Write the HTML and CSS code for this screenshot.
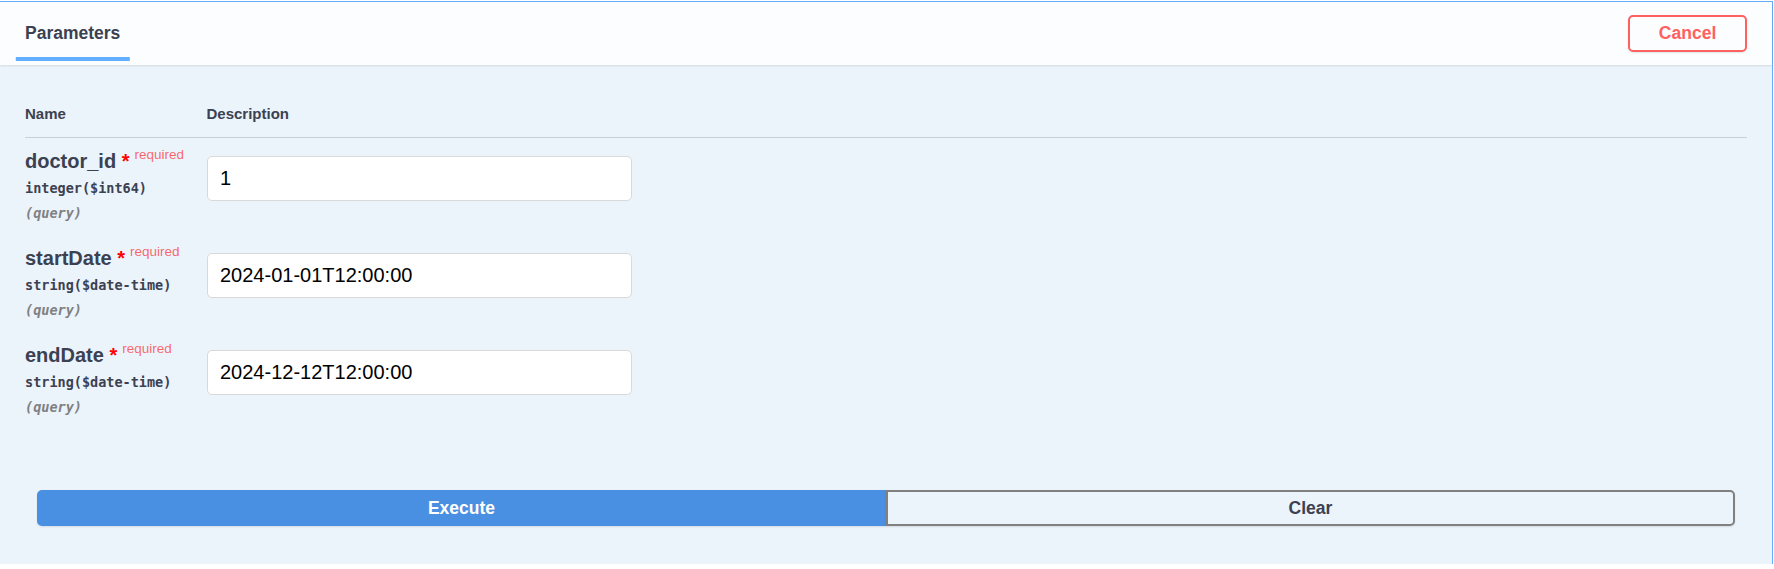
FILE: index.html
```html
<!DOCTYPE html>
<html lang="en">
<head>
<meta charset="utf-8">
<title>Parameters</title>
<link rel="stylesheet" href="styles.css">
</head>
<body>
<div class="opblock">
  <div class="section-header">
    <div class="tab">
      <h4 class="tab-title"><span class="tab-label">Parameters</span></h4>
    </div>
    <button class="btn cancel" type="button">Cancel</button>
  </div>

  <div class="table-container">
    <div class="params-head">
      <div class="th th-name">Name</div>
      <div class="th th-desc">Description</div>
    </div>

    <div class="param-row">
      <div class="col-name">
        <div class="param-name">doctor_id<span class="req-star">&nbsp;*</span><span class="req-label">required</span></div>
        <div class="param-type">integer<span class="prop-format">($int64)</span></div>
        <div class="param-in">(query)</div>
      </div>
      <div class="col-desc"><input class="param-input" type="text" value="1"></div>
    </div>

    <div class="param-row">
      <div class="col-name">
        <div class="param-name">startDate<span class="req-star">&nbsp;*</span><span class="req-label">required</span></div>
        <div class="param-type">string<span class="prop-format">($date-time)</span></div>
        <div class="param-in">(query)</div>
      </div>
      <div class="col-desc"><input class="param-input" type="text" value="2024-01-01T12:00:00"></div>
    </div>

    <div class="param-row">
      <div class="col-name">
        <div class="param-name">endDate<span class="req-star">&nbsp;*</span><span class="req-label">required</span></div>
        <div class="param-type">string<span class="prop-format">($date-time)</span></div>
        <div class="param-in">(query)</div>
      </div>
      <div class="col-desc"><input class="param-input" type="text" value="2024-12-12T12:00:00"></div>
    </div>
  </div>

  <div class="btn-group">
    <button class="btn execute" type="button">Execute</button>
    <button class="btn clear" type="button">Clear</button>
  </div>
</div>
</body>
</html>
```

FILE: styles.css
```css
html, body {
  margin: 0;
  padding: 0;
  background: #ffffff;
}

body {
  font-family: "Liberation Sans", Arial, sans-serif;
  color: #3b4151;
}

.opblock {
  box-sizing: border-box;
  width: 1773px;
  margin-top: 1px;
  border-top: 1px solid #61affe;
  border-right: 1px solid #61affe;
  background: #ebf3fb;
}

/* header */
.section-header {
  box-sizing: border-box;
  display: flex;
  align-items: center;
  justify-content: space-between;
  min-height: 62.5px;
  padding: 10px 25px;
  background: rgba(255, 255, 255, 0.8);
  box-shadow: 0 1px 2px rgba(0, 0, 0, 0.1);
}

.tab-title {
  margin: 0;
  font-size: 17.5px;
  line-height: 20px;
  font-weight: 700;
  color: #3b4151;
}

.tab-label {
  position: relative;
  display: inline-block;
}

.tab-label::after {
  content: "";
  position: absolute;
  left: 50%;
  bottom: -18px;
  width: 120%;
  height: 4px;
  transform: translateX(-50%);
  background: #61affe;
}

.btn {
  box-sizing: border-box;
  font-family: "Liberation Sans", Arial, sans-serif;
  font-size: 17.5px;
  line-height: 20px;
  font-weight: 700;
  padding: 6.25px 28.75px;
  border: 2px solid #808080;
  border-radius: 5px;
  background: transparent;
  color: #3b4151;
  box-shadow: 0 1px 2px rgba(0, 0, 0, 0.1);
  cursor: pointer;
}

.btn.cancel {
  border-color: #ff6060;
  color: #ff6060;
}

/* table */
.table-container {
  padding: 25px 25px 23.5px;
}

.params-head {
  display: grid;
  grid-template-columns: 181.5px 1fr;
  border-bottom: 1px solid rgba(59, 65, 81, 0.2);
}

.th {
  padding: 15px 0;
  font-size: 15px;
  line-height: 17px;
  font-weight: 700;
  color: #3b4151;
}

.param-row {
  display: grid;
  grid-template-columns: 181.5px 1fr;
  height: 97px;
}

.col-name {
  padding-top: 12.5px;
}

.col-desc {
  padding-top: 12.5px;
}

.param-name {
  font-size: 20px;
  line-height: 23px;
  font-weight: 700;
  color: #3b4151;
  white-space: nowrap;
}

.req-star {
  color: #ff0000;
}

.req-label {
  font-size: 13.5px;
  line-height: 0;
  font-weight: 400;
  color: rgba(255, 0, 0, 0.6);
  padding-left: 5px;
  vertical-align: 9px;
}

.param-type,
.param-in {
  font-family: "DejaVu Sans Mono", "Liberation Mono", monospace;
  font-size: 13.5px;
  line-height: 19px;
  font-weight: 700;
  white-space: nowrap;
}

.param-type {
  padding: 6px 0;
  color: #3b4151;
}

.param-in {
  color: #808080;
  font-style: italic;
}

.param-input {
  box-sizing: border-box;
  display: block;
  width: 425px;
  height: 45px;
  margin: 6.25px 0;
  padding: 10px 12.5px;
  border: 1px solid #d9d9d9;
  border-radius: 5px;
  background: #ffffff;
  font-family: "Liberation Sans", Arial, sans-serif;
  font-size: 20px;
  line-height: 23px;
  color: #000000;
  outline: none;
}

/* buttons */
.btn-group {
  display: flex;
  padding: 37.5px 37px;
}

.btn-group .btn {
  flex: 1 1 0;
}

.btn.execute {
  background: #4990e2;
  border-color: #4990e2;
  color: #ffffff;
  border-radius: 5px 0 0 5px;
}

.btn.clear {
  background: transparent;
  border-color: #808080;
  color: #3b4151;
  border-radius: 0 5px 5px 0;
}
```
